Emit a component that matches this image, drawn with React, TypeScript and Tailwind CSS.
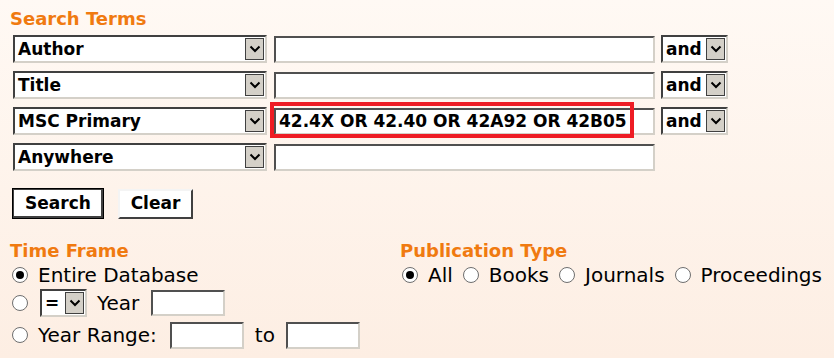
import React from 'react'

const font = { fontFamily: '"DejaVu Sans", Verdana, sans-serif' }

function Arrow() {
  return (
    <div className="flex h-[22px] w-[19px] shrink-0 items-center justify-center border border-[#404040] bg-[#d4d0c8]">
      <svg width="12" height="8" viewBox="0 0 12 8">
        <path d="M1.5 1.5 L6 6 L10.5 1.5" fill="none" stroke="#000" strokeWidth="2" />
      </svg>
    </div>
  )
}

function FakeSelect({ label, w }: { label: string; w: string }) {
  return (
    <div
      className={`${w} flex h-[28px] shrink-0 items-center justify-between border-2 border-t-[#404040] border-l-[#404040] border-b-[#d4d0c8] border-r-[#d4d0c8] bg-white pl-[3px] pr-[1px] text-[17px] font-bold text-black`}
    >
      <span className="leading-none">{label}</span>
      <Arrow />
    </div>
  )
}

function TextBox({ w, h = 'h-[27px]', children }: { w: string; h?: string; children?: React.ReactNode }) {
  return (
    <div
      className={`${w} ${h} flex shrink-0 items-center border-2 border-t-[#505050] border-l-[#505050] border-b-[#d4d0c8] border-r-[#d4d0c8] bg-white pl-[2px] text-[17px] font-bold text-black`}
    >
      {children}
    </div>
  )
}

function Radio({ checked }: { checked?: boolean }) {
  return (
    <span className="flex h-[16px] w-[16px] shrink-0 items-center justify-center rounded-full border border-[#6e6e6e] bg-white">
      {checked && <span className="h-[8px] w-[8px] rounded-full bg-black" />}
    </span>
  )
}

export default function App() {
  const rows = ['Author', 'Title', 'MSC Primary', 'Anywhere']
  return (
    <div style={font} className="h-[358px] w-[834px] overflow-hidden bg-gradient-to-b from-[#fff9f4] to-[#fdeee3] text-black">
      <div className="pl-[10px] pt-[8px]">
        <h2 className="text-[18px] font-bold leading-[22px] text-[#f07a10]">Search Terms</h2>
        <div className="mt-[5px] flex flex-col gap-[8px] pl-[3px]">
          {rows.map((r, i) => (
            <div key={r} className="flex items-center">
              <FakeSelect label={r} w="w-[254px]" />
              <div className="relative ml-[7px]">
                <TextBox w="w-[381px]">
                  {i === 2 && <span className="pl-[1px] leading-none">42.4X OR 42.40 OR 42A92 OR 42B05</span>}
                </TextBox>
                {i === 2 && (
                  <div className="pointer-events-none absolute left-[-4px] top-[-6px] h-[36px] w-[364px] border-[4px] border-[#ee1c24]" />
                )}
              </div>
              {i < 3 && (
                <div className="ml-[6px]">
                  <FakeSelect label="and" w="w-[67px]" />
                </div>
              )}
            </div>
          ))}
        </div>

        <div className="mt-[17px] flex gap-[14px] pl-[2px]">
          <button className="h-[31px] w-[92px] border border-black bg-white text-[17px] font-bold shadow-[inset_1px_1px_0_#404040,inset_-2px_-2px_0_#404040]">
            Search
          </button>
          <button className="mt-[1px] h-[30px] w-[75px] border-2 border-t-[#f4f4f4] border-l-[#f4f4f4] border-b-[#404040] border-r-[#404040] bg-white text-[17px] font-bold">
            Clear
          </button>
        </div>

        <div className="mt-[21px] flex">
          <div className="w-[390px]">
            <h2 className="text-[18px] font-bold leading-[22px] text-[#f07a10]">Time Frame</h2>
            <div className="mt-[2px] flex h-[22px] items-center gap-[10px] pl-[2px] text-[20px]">
              <Radio checked />
              <span>Entire Database</span>
            </div>
            <div className="mt-[3px] flex h-[28px] items-center pl-[2px] text-[20px]">
              <Radio />
              <div className="ml-[12px]">
                <FakeSelect label="=" w="w-[47px]" />
              </div>
              <span className="ml-[10px]">Year</span>
              <div className="ml-[12px]">
                <TextBox w="w-[74px]" h="h-[26px]" />
              </div>
            </div>
            <div className="mt-[4px] flex h-[28px] items-center pl-[2px] text-[20px]">
              <Radio />
              <span className="ml-[10px]">Year Range:</span>
              <div className="ml-[13px]">
                <TextBox w="w-[74px]" h="h-[27px]" />
              </div>
              <span className="ml-[11px]">to</span>
              <div className="ml-[11px]">
                <TextBox w="w-[74px]" h="h-[27px]" />
              </div>
            </div>
          </div>
          <div>
            <h2 className="text-[18px] font-bold leading-[22px] text-[#f07a10]">Publication Type</h2>
            <div className="mt-[2px] flex h-[22px] items-center pl-[2px] text-[20px]">
              <Radio checked />
              <span className="ml-[10px]">All</span>
              <span className="ml-[10px]"><Radio /></span>
              <span className="ml-[10px]">Books</span>
              <span className="ml-[10px]"><Radio /></span>
              <span className="ml-[10px]">Journals</span>
              <span className="ml-[10px]"><Radio /></span>
              <span className="ml-[10px]">Proceedings</span>
            </div>
          </div>
        </div>
      </div>
    </div>
  )
}
